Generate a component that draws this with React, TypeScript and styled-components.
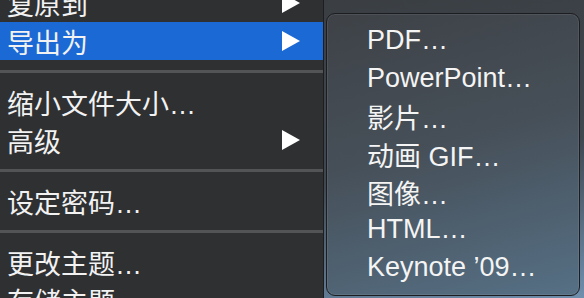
import styled, { createGlobalStyle } from "styled-components";

const GlobalStyle = createGlobalStyle`
  html, body {
    margin: 0;
    padding: 0;
    width: 584px;
    height: 298px;
    overflow: hidden;
    background: #3a3d41;
  }
  body {
    font-family: "Liberation Sans", "Noto Sans CJK SC", sans-serif;
    -webkit-font-smoothing: antialiased;
  }
`;

const Screen = styled.div`
  display: flex;
  width: 584px;
  height: 298px;
  overflow: hidden;
  background: linear-gradient(170deg, #393c40 0%, #3f474f 60%, #6f8fae 100%);
`;

const MainMenu = styled.div`
  width: 323px;
  height: 298px;
  flex-shrink: 0;
  overflow: hidden;
  background: #2f3032;
  border-right: 1px solid #1d1e20;
`;

const MenuList = styled.div`
  display: flex;
  flex-direction: column;
  margin-top: -16px;
`;

const Row = styled.div<{ $active?: boolean }>`
  display: flex;
  align-items: center;
  justify-content: space-between;
  height: 38px;
  padding: 0 23px 0 7px;
  flex-shrink: 0;
  font-size: 27px;
  color: #f2f2f2;
  background: ${(p) => (p.$active ? "#1b69d4" : "transparent")};
`;

const Separator = styled.div`
  height: 23px;
  flex-shrink: 0;
  display: flex;
  align-items: center;
  &::after {
    content: "";
    display: block;
    width: 100%;
    height: 3px;
    background: #535456;
  }
`;

const Arrow = styled.span`
  width: 0;
  height: 0;
  border-top: 10px solid transparent;
  border-bottom: 10px solid transparent;
  border-left: 18px solid #ffffff;
`;

const SubArea = styled.div`
  flex: 1;
  padding: 13px 4px 2px 2px;
  display: flex;
`;

const SubMenu = styled.div`
  flex: 1;
  border: 1px solid #1c1d20;
  border-radius: 9px;
  padding: 8px 0 6px;
  background: linear-gradient(165deg, #3e4247 0%, #464f58 45%, #567085 100%);
  box-shadow: inset 0 0 0 1px rgba(255, 255, 255, 0.08);
  display: flex;
  flex-direction: column;
`;

const SubRow = styled.div`
  height: 37.8px;
  display: flex;
  align-items: center;
  padding-left: 40px;
  font-size: 27px;
  color: #f4f4f4;
  white-space: nowrap;
`;

const mainItems: ({ label: string; sub?: boolean; active?: boolean } | "sep")[] = [
  { label: "复原到", sub: true },
  { label: "导出为", sub: true, active: true },
  "sep",
  { label: "缩小文件大小…" },
  { label: "高级", sub: true },
  "sep",
  { label: "设定密码…" },
  "sep",
  { label: "更改主题…" },
  { label: "存储主题…" },
];

const exportItems = [
  "PDF…",
  "PowerPoint…",
  "影片…",
  "动画 GIF…",
  "图像…",
  "HTML…",
  "Keynote ’09…",
];

export default function App() {
  return (
    <>
      <GlobalStyle />
      <Screen>
        <MainMenu>
          <MenuList>
            {mainItems.map((item, i) =>
              item === "sep" ? (
                <Separator key={i} />
              ) : (
                <Row key={i} $active={item.active}>
                  <span>{item.label}</span>
                  {item.sub && <Arrow />}
                </Row>
              )
            )}
          </MenuList>
        </MainMenu>
        <SubArea>
          <SubMenu>
            {exportItems.map((label) => (
              <SubRow key={label}>{label}</SubRow>
            ))}
          </SubMenu>
        </SubArea>
      </Screen>
    </>
  );
}
